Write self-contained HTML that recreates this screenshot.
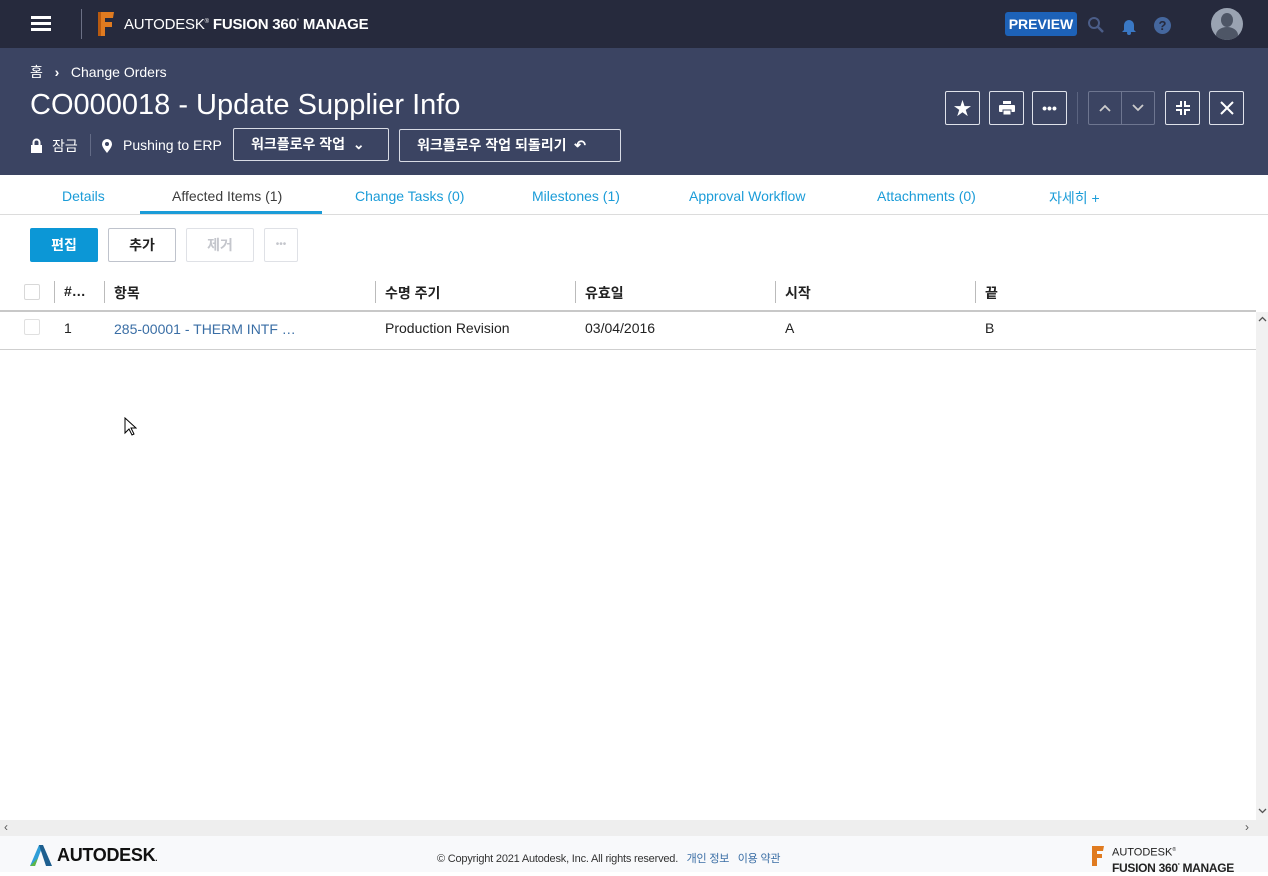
<!DOCTYPE html>
<html><head><meta charset="utf-8"><style>
*{box-sizing:border-box;margin:0;padding:0}
body{width:1268px;height:872px;overflow:hidden;font-family:"Liberation Sans","Noto Sans CJK KR",sans-serif;background:#fff;position:relative;color:#222}
.abs{position:absolute}
#top{left:0;top:0;width:1268px;height:48px;background:#262a3d}
#hdr{left:0;top:48px;width:1268px;height:127px;background:#3b4462;color:#fff}
.btn{position:absolute;border:1px solid #d8dbe4;border-radius:2px;color:#fff}
.ib{position:absolute;top:91px;width:35px;height:34px;border:1px solid #dfe2ea;border-radius:2px;display:flex;align-items:center;justify-content:center}
.tab{position:absolute;top:188px;font-size:14px;color:#1b9cd8}
</style></head><body>
<div id="top" class="abs">
 <div class="abs" style="left:31px;top:16px;width:20px;height:3px;background:#fff;box-shadow:0 6px 0 #fff,0 12px 0 #fff"></div>
 <div class="abs" style="left:81px;top:9px;width:1px;height:30px;background:#6b7085"></div>
 <svg class="abs" style="left:96px;top:10px" width="20" height="28"><path d="M2 2h16l-1 6h-8v4h7v5h-7v9h-5z" fill="#e07b20"/><path d="M2 2l3 0 0 24h-3z" fill="#b85a10"/></svg>
 <div class="abs" style="left:124px;top:16px;font-size:15px;color:#fff;letter-spacing:-.2px">AUTODESK<sup style="font-size:6px">®</sup> <b>FUSION 360<sup style="font-size:6px">°</sup> MANAGE</b></div>
 <div class="abs" style="left:1005px;top:12px;width:72px;height:24px;background:#1d62b8;border-radius:3px;color:#fff;font-weight:bold;font-size:14px;text-align:center;line-height:24px">PREVIEW</div>
 <svg class="abs" style="left:1087px;top:16px" width="18" height="18"><circle cx="7" cy="7" r="5" stroke="#4b5d88" stroke-width="2" fill="none"/><path d="M11 11l5 5" stroke="#4b5d88" stroke-width="2.5"/></svg>
 <svg class="abs" style="left:1121px;top:17px" width="16" height="18"><path d="M3 13V8a5 5 0 0110 0v5l2 2H1z" fill="#3a78c4"/><circle cx="8" cy="16" r="2" fill="#3a78c4"/></svg>
 <div class="abs" style="left:1154px;top:17px;width:17px;height:17px;border-radius:50%;background:#45679e;color:#262a3d;font-weight:bold;font-size:13px;text-align:center;line-height:17px">?</div>
 <div class="abs" style="left:1211px;top:8px;width:32px;height:32px;border-radius:50%;background:#9aa3b2;overflow:hidden"><div class="abs" style="left:10px;top:5px;width:12px;height:14px;border-radius:50%;background:#4e5666"></div><div class="abs" style="left:5px;top:19px;width:22px;height:16px;border-radius:50%;background:#4e5666"></div></div>
</div>
<div id="hdr" class="abs">
 <div class="abs" style="left:30px;top:14px;font-size:14px">홈 &nbsp;&nbsp;<b>›</b>&nbsp;&nbsp; Change Orders</div>
 <div class="abs" style="left:30px;top:41px;font-size:29px">CO000018 - Update Supplier Info</div>
 <svg class="abs" style="left:30px;top:90px" width="13" height="16"><rect x="1" y="7" width="11" height="8" fill="#fff"/><path d="M3.5 7V4.5a3 3 0 016 0V7" stroke="#fff" stroke-width="2" fill="none"/></svg>
 <div class="abs" style="left:52px;top:88px;font-size:14px">잠금</div>
 <div class="abs" style="left:90px;top:86px;width:1px;height:22px;background:#636b86"></div>
 <svg class="abs" style="left:101px;top:90px" width="12" height="16"><path d="M6 15C2 10 1 8 1 6a5 5 0 0110 0c0 2-1 4-5 9z" fill="#fff"/><circle cx="6" cy="6" r="2" fill="#3b4462"/></svg>
 <div class="abs" style="left:123px;top:89px;font-size:14px">Pushing to ERP</div>
 <div class="btn" style="left:233px;top:80px;width:156px;height:33px;font-size:14px;font-weight:bold;line-height:31px;padding-left:17px">워크플로우 작업 &nbsp;⌄</div>
 <div class="btn" style="left:399px;top:81px;width:222px;height:33px;font-size:14px;font-weight:bold;line-height:31px;padding-left:17px">워크플로우 작업 되돌리기 &nbsp;↶</div>
</div>
<div class="ib" style="left:945px"><span style="color:#fff;font-size:18px">★</span></div>
<div class="ib" style="left:989px"><svg width="16" height="14"><rect x="4" y="0" width="8" height="3" fill="#fff"/><rect x="0" y="4" width="16" height="7" rx="1" fill="#fff"/><rect x="4" y="9" width="8" height="5" fill="#fff" stroke="#3b4462"/></svg></div>
<div class="ib" style="left:1032px;color:#fff;font-weight:bold;font-size:14px">•••</div>
<div class="abs" style="left:1077px;top:92px;width:1px;height:32px;background:#5b6480"></div>
<div class="ib" style="left:1088px;width:67px;border-color:#6e7690"><div style="flex:1;text-align:center"><svg width="12" height="8"><path d="M1 7l5-5 5 5" stroke="#ccc" stroke-width="1.8" fill="none"/></svg></div><span style="width:1px;height:32px;background:#6e7690"></span><div style="flex:1;text-align:center"><svg width="12" height="8"><path d="M1 1l5 5 5-5" stroke="#ccc" stroke-width="1.8" fill="none"/></svg></div></div>
<div class="ib" style="left:1165px"><svg width="14" height="14" stroke="#fff" stroke-width="2" fill="none"><path d="M5 0v5H0M9 0v5h5M5 14V9H0M9 14V9h5"/></svg></div>
<div class="ib" style="left:1209px"><svg width="14" height="14" stroke="#fff" stroke-width="2"><path d="M1 1l12 12M13 1L1 13"/></svg></div>

<div class="tab" style="left:62px">Details</div>
<div class="tab" style="left:172px;color:#3c3c3c">Affected Items (1)</div>
<div class="abs" style="left:140px;top:211px;width:182px;height:3px;background:#1b9cd8"></div>
<div class="tab" style="left:355px">Change Tasks (0)</div>
<div class="tab" style="left:532px">Milestones (1)</div>
<div class="tab" style="left:689px">Approval Workflow</div>
<div class="tab" style="left:877px">Attachments (0)</div>
<div class="tab" style="left:1049px">자세히 +</div>
<div class="abs" style="left:0;top:214px;width:1268px;height:1px;background:#dcdcdc"></div>

<div class="abs" style="left:30px;top:228px;width:68px;height:34px;background:#0c97d6;border-radius:2px;color:#fff;font-weight:bold;font-size:14px;text-align:center;line-height:34px">편집</div>
<div class="abs" style="left:108px;top:228px;width:68px;height:34px;border:1px solid #bfc3cc;border-radius:2px;font-weight:bold;font-size:14px;text-align:center;line-height:32px">추가</div>
<div class="abs" style="left:186px;top:228px;width:68px;height:34px;border:1px solid #dfe1e6;border-radius:2px;color:#c4c6cc;font-weight:bold;font-size:14px;text-align:center;line-height:32px">제거</div>
<div class="abs" style="left:264px;top:228px;width:34px;height:34px;border:1px solid #dfe1e6;border-radius:2px;color:#c4c6cc;font-size:10px;text-align:center;line-height:32px">•••</div>

<div class="abs" style="left:24px;top:284px;width:16px;height:16px;border:1px solid #d8d8d8;border-radius:2px"></div>
<div class="abs" style="left:54px;top:281px;width:1px;height:22px;background:#bbb"></div>
<div class="abs" style="left:64px;top:283px;font-size:14px;font-weight:bold">#…</div>
<div class="abs" style="left:104px;top:281px;width:1px;height:22px;background:#bbb"></div>
<div class="abs" style="left:114px;top:283px;font-size:14px;font-weight:bold">항목</div>
<div class="abs" style="left:375px;top:281px;width:1px;height:22px;background:#bbb"></div>
<div class="abs" style="left:385px;top:283px;font-size:14px;font-weight:bold">수명 주기</div>
<div class="abs" style="left:575px;top:281px;width:1px;height:22px;background:#bbb"></div>
<div class="abs" style="left:585px;top:283px;font-size:14px;font-weight:bold">유효일</div>
<div class="abs" style="left:775px;top:281px;width:1px;height:22px;background:#bbb"></div>
<div class="abs" style="left:785px;top:283px;font-size:14px;font-weight:bold">시작</div>
<div class="abs" style="left:975px;top:281px;width:1px;height:22px;background:#bbb"></div>
<div class="abs" style="left:985px;top:283px;font-size:14px;font-weight:bold">끝</div>
<div class="abs" style="left:0;top:310px;width:1256px;height:2px;background:#c8c8c8"></div>

<div class="abs" style="left:24px;top:319px;width:16px;height:16px;border:1px solid #e0e0e0;border-radius:2px"></div>
<div class="abs" style="left:64px;top:320px;font-size:14px">1</div>
<div class="abs" style="left:114px;top:321px;font-size:14px;color:#3a6ea5">285-00001 - THERM INTF …</div>
<div class="abs" style="left:385px;top:320px;font-size:14px">Production Revision</div>
<div class="abs" style="left:585px;top:320px;font-size:14px">03/04/2016</div>
<div class="abs" style="left:785px;top:320px;font-size:14px">A</div>
<div class="abs" style="left:985px;top:320px;font-size:14px">B</div>
<div class="abs" style="left:0;top:349px;width:1256px;height:1px;background:#cfcfcf"></div>

<svg class="abs" style="left:124px;top:417px" width="13" height="20"><path d="M1 1v15l4-4 3 6 2-1-3-6h5z" fill="#fff" stroke="#000"/></svg>

<div class="abs" style="left:1256px;top:312px;width:12px;height:508px;background:#f1f1f1"></div>
<svg class="abs" style="left:1258px;top:316px" width="9" height="6"><path d="M1 5l3.5-3.5L8 5" stroke="#555" stroke-width="1.3" fill="none"/></svg>
<svg class="abs" style="left:1258px;top:808px" width="9" height="6"><path d="M1 1l3.5 3.5L8 1" stroke="#555" stroke-width="1.3" fill="none"/></svg>
<div class="abs" style="left:0;top:820px;width:1268px;height:16px;background:#eeeeee"></div>
<div class="abs" style="left:4px;top:820px;font-size:12px;color:#555">‹</div>
<div class="abs" style="left:1245px;top:820px;font-size:12px;color:#555">›</div>

<div class="abs" style="left:0;top:836px;width:1268px;height:36px;background:#f8f9fb"></div>
<svg class="abs" style="left:30px;top:845px" width="22" height="21"><path d="M0 21L9 0h4L5 21z" fill="#2f9ed8"/><path d="M13 0h-4l7 21h6z" fill="#1e5f8f"/><path d="M0 21l5 0 3-8z" fill="#5db647"/></svg>
<div class="abs" style="left:57px;top:845px;font-size:18px;font-weight:bold;color:#111;letter-spacing:-.3px">AUTODESK<span style="font-size:8px">.</span></div>
<div class="abs" style="left:437px;top:850px;font-size:11px;color:#333;letter-spacing:-.2px">© Copyright 2021 Autodesk, Inc. All rights reserved. &nbsp;&nbsp;<span style="color:#3a6ea5">개인 정보 &nbsp;&nbsp;이용 약관</span></div>
<svg class="abs" style="left:1091px;top:845px" width="14" height="22"><path d="M1 1h12l-1 5h-6v3h5v4h-5v8h-5z" fill="#e07b20"/></svg>
<div class="abs" style="left:1112px;top:844px;font-size:11px;color:#222;line-height:13px">AUTODESK<sup style="font-size:5px">®</sup><br><b style="font-size:12px;letter-spacing:-.3px">FUSION 360<sup style="font-size:5px">°</sup> MANAGE</b></div>
</body></html>
